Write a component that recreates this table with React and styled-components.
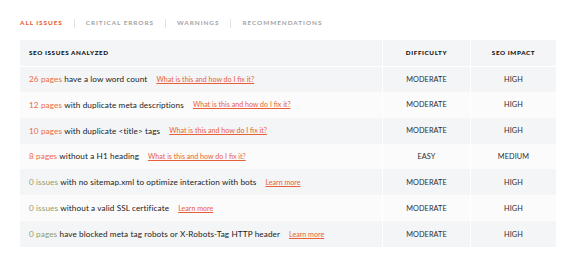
import React from "react";
import styled, { createGlobalStyle } from "styled-components";

const Global = createGlobalStyle`
  html, body { margin: 0; padding: 0; background: #fff; }
  body { font-family: Lato, "Open Sans", "Liberation Sans", sans-serif; -webkit-font-smoothing: antialiased; }
`;

const Page = styled.div`
  width: 577px;
  height: 268px;
  padding-left: 20px;
  box-sizing: border-box;
`;

const Tabs = styled.nav`
  display: flex;
  align-items: center;
  height: 40px;
  padding-top: 6px;
  box-sizing: border-box;
`;

const Tab = styled.span`
  font-size: 6.4px;
  font-weight: 700;
  letter-spacing: 0.95px;
  text-transform: uppercase;
  color: ${(p) => (p.$active ? "#e8552b" : "#a3a3a3")};
  line-height: 10px;
`;

const Sep = styled.span`
  width: 1px;
  height: 9px;
  background: #e3e3e3;
  margin: 0 11px;
`;

const Table = styled.div`
  width: 536px;
  display: grid;
  grid-template-columns: 362px 88px 86px;
`;

const Row = styled.div`
  display: contents;
  & > * {
    background: ${(p) => (p.$alt ? "#fbfbfc" : "#f4f5f6")};
  }
`;

const Cell = styled.div`
  height: 25.875px;
  display: flex;
  align-items: center;
  justify-content: ${(p) => (p.$first ? "flex-start" : "center")};
  padding-left: ${(p) => (p.$first ? "9px" : "0")};
  border-left: ${(p) => (p.$first ? "none" : "1px solid #ffffff")};
  border-top: ${(p) => (p.$top ? "1px solid #ffffff" : "none")};
  box-sizing: border-box;
  white-space: nowrap;
`;

const HeadText = styled.span`
  font-size: 6.3px;
  font-weight: 900;
  letter-spacing: 0.6px;
  color: #111;
  text-transform: uppercase;
`;

const Issue = styled.span`
  font-size: 8.2px;
  color: #222;
  letter-spacing: 0.1px;
`;

const Count = styled.span`
  color: ${(p) => (p.$zero ? "#8f9c6e" : "#ef6a3f")};
`;

const Help = styled.a`
  font-size: 7.1px;
  color: #e8603a;
  text-decoration: underline;
  margin-left: 9px;
  cursor: pointer;
`;

const Level = styled.span`
  font-size: 7.3px;
  color: #2d2d2d;
  text-transform: uppercase;
  letter-spacing: 0.1px;
`;

const rows = [
  { count: "26 pages", text: "have a low word count", link: "What is this and how do I fix it?", diff: "Moderate", impact: "High" },
  { count: "12 pages", text: "with duplicate meta descriptions", link: "What is this and how do I fix it?", diff: "Moderate", impact: "High" },
  { count: "10 pages", text: "with duplicate <title> tags", link: "What is this and how do I fix it?", diff: "Moderate", impact: "High" },
  { count: "8 pages", text: "without a H1 heading", link: "What is this and how do I fix it?", diff: "Easy", impact: "Medium" },
  { count: "0 issues", zero: true, text: "with no sitemap.xml to optimize interaction with bots", link: "Learn more", diff: "Moderate", impact: "High" },
  { count: "0 issues", zero: true, text: "without a valid SSL certificate", link: "Learn more", diff: "Moderate", impact: "High" },
  { count: "0 pages", zero: true, text: "have blocked meta tag robots or X-Robots-Tag HTTP header", link: "Learn more", diff: "Moderate", impact: "High" },
];

export default function App() {
  return (
    <Page>
      <Global />
      <Tabs>
        <Tab $active>All Issues</Tab>
        <Sep />
        <Tab>Critical Errors</Tab>
        <Sep />
        <Tab>Warnings</Tab>
        <Sep />
        <Tab>Recommendations</Tab>
      </Tabs>
      <Table>
        <Row>
          <Cell $first><HeadText>SEO Issues Analyzed</HeadText></Cell>
          <Cell><HeadText>Difficulty</HeadText></Cell>
          <Cell><HeadText>SEO Impact</HeadText></Cell>
        </Row>
        {rows.map((r, i) => (
          <Row key={i} $alt={i % 2 === 1}>
            <Cell $first $top={i === 0}>
              <Issue>
                <Count $zero={r.zero}>{r.count}</Count> {r.text}
              </Issue>
              <Help>{r.link}</Help>
            </Cell>
            <Cell $top={i === 0}><Level>{r.diff}</Level></Cell>
            <Cell $top={i === 0}><Level>{r.impact}</Level></Cell>
          </Row>
        ))}
      </Table>
    </Page>
  );
}
